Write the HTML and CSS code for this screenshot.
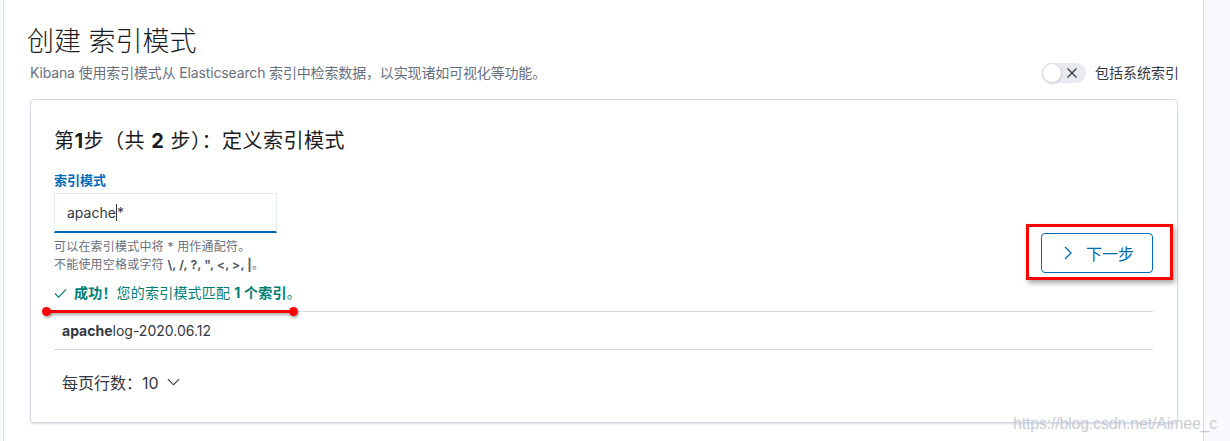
FILE: index.html
```html
<!DOCTYPE html>
<html lang="zh">
<head>
<meta charset="utf-8">
<title>创建 索引模式</title>
<link rel="stylesheet" href="styles.css">
</head>
<body>
<div class="page">
  <h1 class="title">创建 索引模式</h1>
  <div class="subrow">
    <p class="subtitle">Kibana 使用索引模式从 Elasticsearch 索引中检索数据，以实现诸如可视化等功能。</p>
    <label class="switch">
      <span class="track">
        <span class="knob"></span>
        <svg class="xicon" viewBox="0 0 12 12" width="12" height="12"><path d="M1.5 1.5 L10.5 10.5 M10.5 1.5 L1.5 10.5" stroke="#343741" stroke-width="1.2" fill="none"/></svg>
      </span>
      <span class="switch-label">包括系统索引</span>
    </label>
  </div>

  <div class="card">
    <h2 class="step">第<b>1</b>步（共 <b>2</b> 步）：定义索引模式</h2>
    <div class="formrow">
      <div class="form">
        <div class="label">索引模式</div>
        <div class="input">apache<span class="caret"></span>*</div>
        <div class="help">
          <div>可以在索引模式中将 * 用作通配符。</div>
          <div>不能使用空格或字符 <strong>\, /, ?, ", &lt;, &gt;, |</strong>。</div>
        </div>
      </div>
      <button class="next">
        <svg viewBox="0 0 8 14" width="8" height="14"><path d="M1 1 L7 7 L1 13" stroke="#006bb4" stroke-width="1.3" fill="none"/></svg>
        <span>下一步</span>
      </button>
    </div>
    <div class="success">
      <svg viewBox="0 0 14 12" width="13" height="11"><path d="M1 6 L5 10 L13 1.5" stroke="#017d73" stroke-width="1.2" fill="none"/></svg>
      <span><strong>成功！</strong>您的索引模式匹配 <strong>1 个索引</strong>。</span>
    </div>
    <div class="table">
      <div class="row"><strong>apache</strong>log-2020.06.12</div>
    </div>
    <div class="pager">
      <span>每页行数：10</span>
      <svg viewBox="0 0 14 8" width="13" height="8"><path d="M1 1 L7 7 L13 1" stroke="#343741" stroke-width="1.2" fill="none"/></svg>
    </div>
  </div>
</div>

<div class="mark-line"><span class="dot dot-l"></span><span class="dot dot-r"></span></div>
<div class="mark-box"></div>
<div class="watermark">https://blog.csdn.net/Aimee_c</div>
</body>
</html>
```

FILE: styles.css
```css
* { box-sizing: border-box; }
html, body { margin: 0; padding: 0; }
body {
  width: 1230px;
  height: 441px;
  overflow: hidden;
  background: #f8f9fc;
  font-family: "Inter", "Noto Sans CJK SC", sans-serif;
  color: #343741;
  position: relative;
}
.page {
  margin-left: 3px;
  width: 1201px;
  height: 441px;
  background: #fff;
  border-left: 1px solid #dfe3ec;
  border-right: 1px solid #d3dae6;
  padding: 24px 24px 0 26px;
}
.title {
  margin: 0 0 3px -3px;
  font-size: 27px;
  line-height: 36px;
  font-weight: 300;
  color: #1a1c21;
}
.subrow {
  display: flex;
  justify-content: space-between;
  align-items: center;
  height: 20px;
}
.subtitle {
  margin: 0;
  font-size: 14px;
  line-height: 20px;
  color: #69707d;
  letter-spacing: -0.15px;
}
.switch {
  display: flex;
  align-items: center;
  gap: 9px;
}
.track {
  position: relative;
  width: 44px;
  height: 20px;
  border-radius: 10px;
  background: #e7eaef;
  display: flex;
  align-items: center;
  justify-content: flex-end;
  padding-right: 8px;
}
.knob {
  position: absolute;
  left: 0;
  top: 0;
  width: 20px;
  height: 20px;
  border-radius: 50%;
  background: #fff;
  border: 1px solid #d3dae6;
  box-shadow: 0 1px 2px rgba(0,0,0,0.15);
}
.switch-label {
  font-size: 14px;
  line-height: 20px;
  color: #343741;
}
.card {
  margin-top: 16px;
  width: 1148px;
  border: 1px solid #d3dae6;
  border-radius: 4px;
  box-shadow: 0 2px 2px -1px rgba(152,162,179,0.3), 0 1px 5px -2px rgba(152,162,179,0.3);
  padding: 24px 24px 24px 23px;
  background: #fff;
}
.step {
  margin: 0 0 14px;
  font-size: 20px;
  line-height: 34px;
  font-weight: 400;
  color: #1a1c21;
  letter-spacing: 0.5px;
}
.step b { font-weight: 700; }
.formrow {
  display: flex;
  justify-content: space-between;
  align-items: flex-end;
}
.label {
  font-size: 13px;
  line-height: 17px;
  font-weight: 700;
  color: #006bb4;
  margin-bottom: 4px;
}
.input {
  width: 223px;
  height: 40px;
  border: 1px solid #e6eaf1;
  border-bottom: 2px solid #006bb4;
  background: #fff;
  padding: 0 12px;
  font-size: 14px;
  line-height: 37px;
  color: #343741;
}
.caret {
  display: inline-block;
  width: 1px;
  height: 17px;
  background: #343741;
  vertical-align: -3px;
}
.help {
  margin-top: 5px;
  font-size: 12px;
  line-height: 18px;
  color: #69707d;
  letter-spacing: 0.2px;
}
.help strong { color: #535966; font-weight: 700; }
.next {
  width: 112px;
  height: 40px;
  margin-bottom: 1px;
  border: 1px solid #006bb4;
  border-radius: 4px;
  background: #fff;
  color: #006bb4;
  font-family: inherit;
  font-size: 16px;
  display: flex;
  align-items: center;
  justify-content: center;
  gap: 14px;
  padding: 0 0 0 4px;
}
.success {
  margin-top: 9px;
  display: flex;
  align-items: center;
  gap: 7px;
  font-size: 14px;
  line-height: 20px;
  color: #017d73;
  letter-spacing: 0.2px;
}
.success strong { font-weight: 700; }
.table {
  margin-top: 8px;
  border-top: 1px solid #d3dae6;
  border-bottom: 1px solid #d3dae6;
}
.row {
  height: 37px;
  padding-left: 8px;
  font-size: 14px;
  line-height: 37px;
  color: #343741;
}
.row strong { font-weight: 700; }
.pager {
  margin-top: 16px;
  height: 32px;
  padding-left: 8px;
  display: flex;
  align-items: center;
  gap: 8px;
  font-size: 16px;
  color: #343741;
}
.mark-line {
  position: absolute;
  left: 46px;
  top: 310px;
  width: 248px;
  height: 3px;
  background: #f00;
  box-shadow: 1px 2px 3px rgba(0,0,0,0.35);
}
.dot {
  position: absolute;
  top: -3px;
  width: 9px;
  height: 9px;
  border-radius: 50%;
  background: #f00;
  box-shadow: 1px 2px 3px rgba(0,0,0,0.3);
}
.dot-l { left: -4px; }
.dot-r { right: -4px; }
.mark-box {
  position: absolute;
  left: 1026px;
  top: 224px;
  width: 147px;
  height: 56px;
  border: 3px solid #f00;
  box-shadow: 2px 3px 5px rgba(0,0,0,0.35);
}
.watermark {
  position: absolute;
  left: 1013px;
  top: 415px;
  font-family: "Liberation Sans", sans-serif;
  font-size: 16px;
  line-height: 18px;
  color: rgba(190,195,205,0.85);
  letter-spacing: -0.2px;
}
```
